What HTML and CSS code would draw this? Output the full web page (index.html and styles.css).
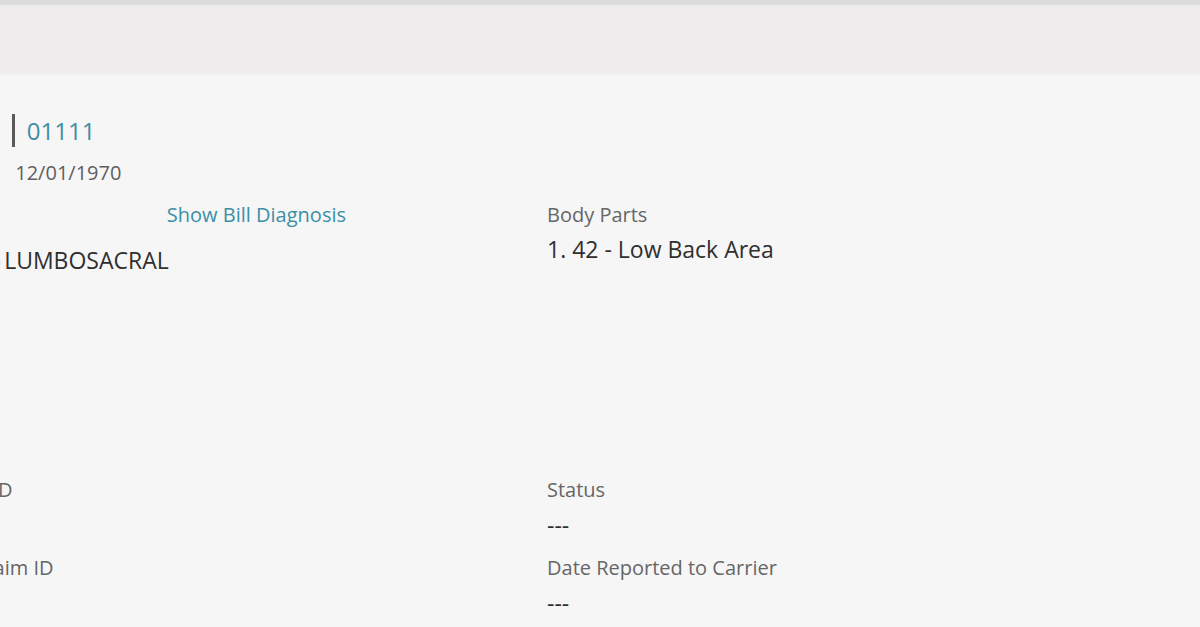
FILE: index.html
```html
<!DOCTYPE html>
<html lang="en">
<head>
    <meta charset="UTF-8">
    <meta name="viewport" content="width=device-width, initial-scale=1.0">
    <title>Claim 01111</title>
    <link rel="stylesheet" href="styles.css">
</head>
<body>
    <div class="top-strip"></div>
    <div class="subnav"></div>

    <main class="content">
        <section class="claimant">
            <h1 class="claim-title"><span class="claim-name">Claim</span><span class="claim-no">01111</span></h1>
            <div class="claim-dob"><span class="dob-label">DOB:</span>12/01/1970</div>
        </section>

        <section class="details">
            <div class="diagnosis">
                <div class="diagnosis-head">
                    <span class="label">ICD-10</span>
                    <a href="#" class="link">Show Bill Diagnosis</a>
                </div>
                <div class="value diagnosis-value"><span class="diag-code">M54.5</span> LUMBOSACRAL</div>
            </div>
            <div class="field">
                <div class="label">Body Parts</div>
                <div class="value">1. 42 - Low Back Area</div>
            </div>
        </section>

        <section class="info">
            <div class="field">
                <div class="label">Claim ID</div>
                <div class="value">&nbsp;</div>
            </div>
            <div class="field">
                <div class="label">Status</div>
                <div class="value">---</div>
            </div>
            <div class="field">
                <div class="label">TPA Claim ID</div>
                <div class="value">&nbsp;</div>
            </div>
            <div class="field">
                <div class="label">Date Reported to Carrier</div>
                <div class="value">---</div>
            </div>
        </section>
    </main>
</body>
</html>
```

FILE: styles.css
```css
body {
    font-family: 'Open Sans', Arial, sans-serif;
    margin: 0;
    padding: 0;
    height: 100vh;
    overflow: hidden;
    background: #f6f6f6;
    color: #333;
}

.top-strip {
    height: 5px;
    background: #dcdcdc;
}

.subnav {
    height: 70px;
    background: #eeeced;
    border-bottom: 1px solid #f1f0f0;
    box-sizing: border-box;
}

.content {
    margin-left: -65px;
    padding-top: 39px;
}

.claim-title {
    margin: 0;
    font-size: 24px;
    line-height: 34px;
    font-weight: 400;
    color: #555;
}

.claim-name {
    margin-right: 14px;
}

.claim-no {
    border-left: 3px solid #5a5a5a;
    padding-left: 12px;
    color: #3e8ea4;
}

.claim-dob {
    margin-top: 11px;
    font-size: 20px;
    line-height: 28px;
    color: #5f5f5f;
}

.dob-label {
    margin-right: 32px;
}

.details,
.info {
    display: grid;
    grid-template-columns: 411px 1fr;
    column-gap: 201px;
}

.details {
    margin-top: 14px;
    height: 275px;
}

.label {
    font-size: 20px;
    line-height: 28px;
    color: #666;
}

.value {
    margin-top: 4px;
    font-size: 23px;
    line-height: 32px;
    color: #2f2f2f;
}

.diagnosis-head {
    display: flex;
    justify-content: space-between;
    align-items: baseline;
}

.diagnosis-value {
    margin-top: 15px;
}

.diag-code {
    margin-right: -3px;
}

.link {
    font-size: 20px;
    line-height: 28px;
    color: #3b8fa6;
    text-decoration: none;
}

.info .field {
    margin-bottom: 13px;
}

.info .value {
    margin-top: 5px;
}
```
